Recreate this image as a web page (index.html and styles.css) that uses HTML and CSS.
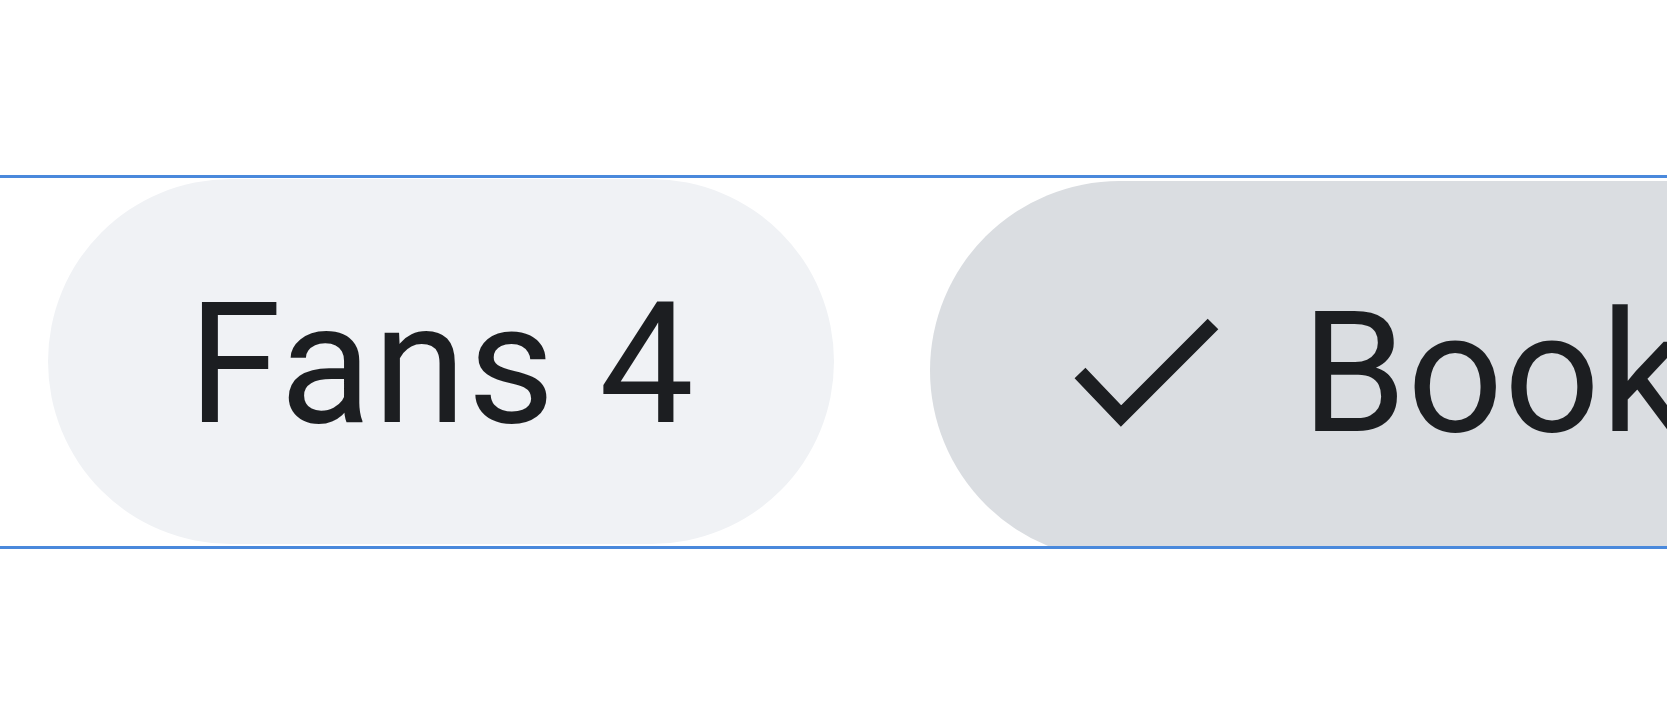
FILE: index.html
```html
<!DOCTYPE html>
<html lang="en">
<head>
    <meta charset="UTF-8">
    <meta name="viewport" content="width=device-width, initial-scale=1.0">
    <title>Filters</title>
    <link rel="stylesheet" href="styles.css">
</head>
<body>

<div class="chip-bar">
    <button class="chip">Fans 4</button>
    <button class="chip chip-selected">
        <svg class="check" viewBox="0 0 152 115" width="152" height="115">
            <path d="M9 57 L50 100 L142 8" fill="none" stroke="#1c1e21" stroke-width="15" stroke-linejoin="miter"/>
        </svg>
        <span>Bookmarks</span>
    </button>
</div>

</body>
</html>
```

FILE: styles.css
```css
body {
    margin: 0;
    background-color: #fff;
    font-family: Roboto, "Noto Sans", sans-serif;
    overflow: hidden;
}
.chip-bar {
    position: relative;
    display: flex;
    align-items: flex-start;
    gap: 96px;
    margin-top: 175px;
    height: 374px;
    padding-left: 48px;
    white-space: nowrap;
}
/* focus lines sit over the chips */
.chip-bar::after {
    content: "";
    position: absolute;
    left: 0;
    right: 0;
    top: 0;
    bottom: 0;
    border-top: 3px solid #4a89dc;
    border-bottom: 3px solid #4a89dc;
    pointer-events: none;
}
.chip {
    display: flex;
    align-items: center;
    flex-shrink: 0;
    margin-top: 4px;
    height: 365px;
    padding: 5px 139px 0 140px;
    border: none;
    border-radius: 190px;
    background-color: #f0f2f5;
    color: #1c1e21;
    font-family: inherit;
    font-size: 169px;
    font-weight: 400;
    letter-spacing: 1.2px;
    cursor: pointer;
}
.chip-selected {
    margin-top: 6px;
    height: 379px;
    padding-left: 141px;
    gap: 78px;
    background-color: #dadde1;
    letter-spacing: 0.5px;
}
.check {
    flex-shrink: 0;
}
```
